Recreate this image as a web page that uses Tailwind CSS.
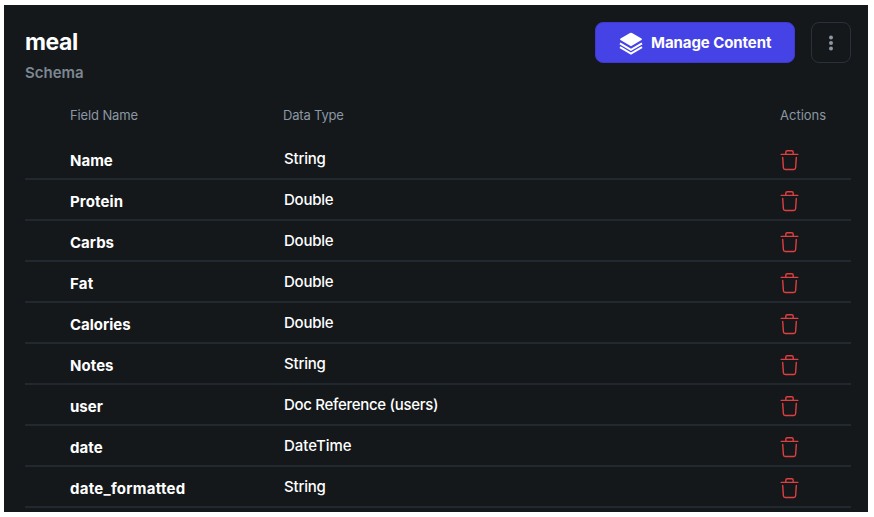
<!DOCTYPE html>
<html lang="en">
<head>
<meta charset="utf-8">
<title>meal schema</title>
<script src="https://cdn.jsdelivr.net/npm/@tailwindcss/browser@4"></script>
</head>
<body class="h-[517px] w-[874px] overflow-hidden bg-white pt-[5px] pl-1 font-['Inter',sans-serif]">
<main class="h-[507px] w-[864px] overflow-hidden bg-[#14181b] pr-[17px] pl-[21px] pt-[17px] text-white">
  <header class="flex h-[77px] items-start justify-between">
    <div>
      <h1 class="mt-1 h-8 text-[23px] leading-8 font-bold tracking-[-0.400px]">meal</h1>
      <p class="mt-[5px] text-[15px] leading-5 font-semibold text-[#7c8791]">Schema</p>
    </div>
    <div class="flex gap-4">
      <button class="flex h-[41px] w-[200px] items-center rounded-lg border border-[#4039cf] bg-[#4542e6] pl-[23px]">
        <svg class="mt-[3px] size-6 shrink-0" viewBox="0 0 24 24" fill="none" stroke="#fff" stroke-width="2"><path d="M12 .8Q12.500.8 13 1.100L22.500 6.500Q23.500 7.300 22.500 8.100L12 14.300 1.500 8.100Q.5 7.300 1.500 6.500L11 1.100Q11.500.8 12 .8Z" fill="#fff" stroke="none"/><path d="M1 11.300 12 17.800 23 11.300M1 15.200 12 21.700 23 15.200"/></svg>
        <span class="ml-2 text-[15px] leading-5 font-bold tracking-[-0.080px] whitespace-nowrap">Manage Content</span>
      </button>
      <button class="flex h-[41px] w-10 items-center justify-center rounded-lg border-[1.500px] border-[#2a3138]">
        <svg class="h-4 w-1" viewBox="0 0 4 16" fill="#8b97a2"><circle cx="2" cy="2.500" r="2"/><circle cx="2" cy="8" r="2"/><circle cx="2" cy="13.500" r="2"/></svg>
      </button>
    </div>
  </header>
  <div class="grid h-10 grid-cols-[213px_497px_1fr] pt-[6px] pl-[45px] text-[13px] leading-5 text-[#8b97a2]"><div class="tracking-[-0.130px]">Field Name</div><div class="tracking-[-0.180px]">Data Type</div><div>Actions</div></div>
  <div id="rows"></div>
</main>
<template id="row">
  <div class="grid h-[41px] grid-cols-[214px_496px_1fr] border-b-2 border-[#22282f] pl-[45px] text-[15px] leading-5">
    <div class="pt-3 font-bold"></div>
    <div class="pt-[10px] font-medium"></div>
    <svg class="-ml-px mt-[10px] h-[22px] w-5" viewBox="0 0 20 22" fill="none" stroke="#df3f3f" stroke-width="1.400" stroke-linecap="round" stroke-linejoin="round"><path d="M2.200 5.400H18.800M6.800 5.200V3.200Q6.800 1.700 8.200 1.700H12.800Q14.200 1.700 14.200 3.200V5.200M3.700 8.500 4.400 18.800Q4.500 20.500 6.200 20.500H14.800Q16.500 20.500 16.600 18.800L17.300 8.500"/></svg>
  </div>
</template>
<script>
const fields = [["Name","String",0,-0.2],["Protein","Double",0.12,-0.25],["Carbs","Double",0,-0.25],["Fat","Double",0.2,-0.25],["Calories","Double",0,-0.25],["Notes","String",0.05,-0.2],["user","Doc Reference (users)",0,-0.3],["date","DateTime",0.1,0],["date_formatted","String",0.26,-0.2]];
for (const [name, type, nameSpacing, typeSpacing] of fields) {
  const r = document.getElementById("row").content.cloneNode(true);
  const [a, b] = r.querySelectorAll("div > div");
  a.textContent = name; b.textContent = type;
  a.style.letterSpacing = nameSpacing + "px";
  b.style.letterSpacing = typeSpacing + "px";
  document.getElementById("rows").append(r);
}
</script>
</body>
</html>
